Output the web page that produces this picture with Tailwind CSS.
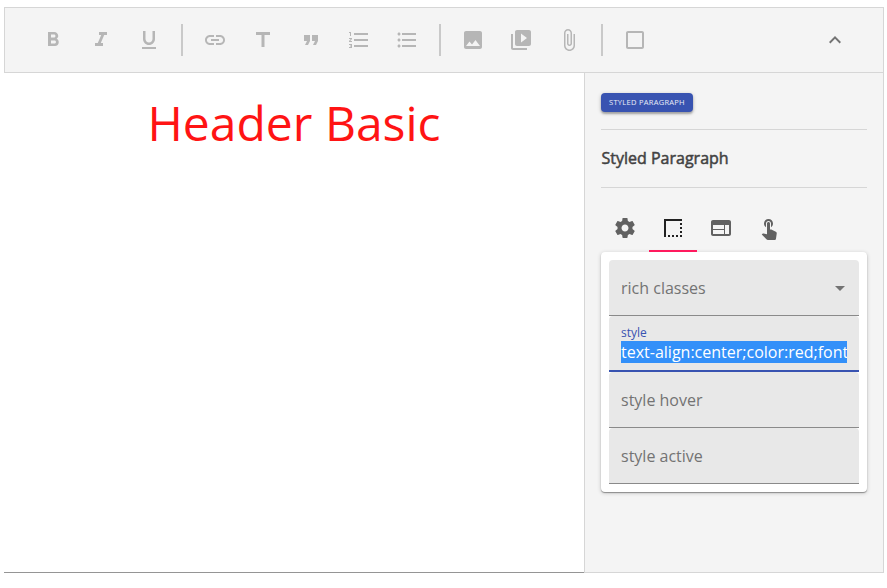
<!DOCTYPE html>
<html lang="en">
<head>
<meta charset="utf-8">
<title>Editor</title>
<script src="https://cdn.jsdelivr.net/npm/@tailwindcss/browser@4"></script>
</head>
<body class="bg-white w-[887px] h-[588px] overflow-hidden pl-1 pt-[7px] font-['Open_Sans',sans-serif]">
<div class="w-[880px] h-[566px] flex flex-col">
  <header class="h-[66px] shrink-0 border border-[#d6d6d6] bg-[#f4f4f4] flex items-center pl-9 text-[#b6b6b6]">
    <div class="flex gap-6">
      <svg class="size-6" viewBox="0 0 24 24" fill="currentColor"><path d="M15.600 10.790c.97-.67 1.650-1.770 1.650-2.790 0-2.260-1.750-4-4-4H7v14h7.040c2.090 0 3.710-1.700 3.710-3.790 0-1.520-.86-2.820-2.150-3.420zM10 6.500h3c.83 0 1.500.67 1.500 1.500s-.67 1.500-1.500 1.500h-3zm3.500 9H10v-3h3.500c.83 0 1.500.67 1.500 1.500s-.67 1.500-1.500 1.500z"/></svg>
      <svg class="size-6" viewBox="0 0 24 24" fill="currentColor"><path d="M10 4v3h2.210l-3.420 8H6v3h8v-3h-2.210l3.420-8H18V4z"/></svg>
      <svg class="size-6" viewBox="0 0 24 24" fill="currentColor"><path d="M12 17c3.310 0 6-2.690 6-6V3h-2.500v8c0 1.930-1.570 3.500-3.500 3.500S8.500 12.930 8.500 11V3H6v8c0 3.310 2.690 6 6 6zm-7 2v2h14v-2z"/></svg>
    </div>
    <div class="w-0.5 h-8 bg-[#c9c9c9] mx-5"></div>
    <div class="flex gap-6">
      <svg class="size-6" viewBox="0 0 24 24" fill="currentColor"><path d="M3.900 12c0-1.710 1.390-3.100 3.100-3.100h4V7H7c-2.760 0-5 2.240-5 5s2.240 5 5 5h4v-1.900H7c-1.710 0-3.100-1.390-3.100-3.100zM8 13h8v-2H8zm9-6h-4v1.900h4c1.710 0 3.100 1.390 3.100 3.100s-1.390 3.100-3.100 3.100h-4V17h4c2.760 0 5-2.240 5-5s-2.240-5-5-5z"/></svg>
      <svg class="size-6" viewBox="0 0 24 24" fill="currentColor"><path d="M5 4v3h5.500v12h3V7H19V4z"/></svg>
      <svg class="size-6" viewBox="0 0 24 24" fill="currentColor"><path d="M6 17h3l2-4V7H5v6h3zm8 0h3l2-4V7h-6v6h3z"/></svg>
      <svg class="size-6" viewBox="0 0 24 24" fill="currentColor"><path d="M2 17h2v.5H3v1h1v.5H2v1h3v-4H2zm1-9h1V4H2v1h1zm-1 3h1.800L2 13.100v.9h3v-1H3.200L5 10.900V10H2zm5-6v2h14V5zm0 14h14v-2H7zm0-6h14v-2H7z"/></svg>
      <svg class="size-6" viewBox="0 0 24 24" fill="currentColor"><path d="M4 10.500c-.83 0-1.500.67-1.500 1.500s.67 1.500 1.500 1.500 1.500-.67 1.500-1.500-.67-1.500-1.500-1.500zm0-6c-.83 0-1.500.67-1.500 1.500S3.170 7.500 4 7.500 5.500 6.830 5.500 6 4.830 4.500 4 4.500zm0 12c-.83 0-1.500.68-1.500 1.500s.68 1.500 1.500 1.500 1.500-.68 1.500-1.500-.67-1.500-1.500-1.500zM7 19h14v-2H7zm0-6h14v-2H7zm0-8v2h14V5z"/></svg>
    </div>
    <div class="w-0.5 h-8 bg-[#c9c9c9] mx-5"></div>
    <div class="flex gap-6">
      <svg class="size-6" viewBox="0 0 24 24" fill="currentColor"><path d="M21 19V5c0-1.100-.9-2-2-2H5c-1.100 0-2 .9-2 2v14c0 1.100.9 2 2 2h14c1.100 0 2-.9 2-2zM8.500 13.500l2.500 3.010L14.500 12l4.500 6H5z"/></svg>
      <svg class="size-6" viewBox="0 0 24 24" fill="currentColor"><path d="M4 6H2v14c0 1.100.9 2 2 2h14v-2H4zm16-4H8c-1.100 0-2 .9-2 2v12c0 1.100.9 2 2 2h12c1.100 0 2-.9 2-2V4c0-1.100-.9-2-2-2zm-8 12.500v-9l6 4.500z"/></svg>
      <svg class="size-6" viewBox="0 0 24 24" fill="currentColor"><path d="M16.500 6v11.500c0 2.210-1.790 4-4 4s-4-1.790-4-4V5c0-1.380 1.120-2.500 2.500-2.500s2.500 1.120 2.500 2.500v10.500c0 .55-.45 1-1 1s-1-.45-1-1V6H10v9.500c0 1.380 1.120 2.500 2.500 2.500s2.500-1.120 2.500-2.500V5c0-2.210-1.790-4-4-4S7 2.790 7 5v12.500c0 3.040 2.460 5.500 5.500 5.500s5.500-2.460 5.500-5.500V6z"/></svg>
    </div>
    <div class="w-0.5 h-8 bg-[#c9c9c9] mx-5"></div>
    <svg class="size-6" viewBox="0 0 24 24" fill="currentColor"><path d="M19 5v14H5V5zm0-2H5c-1.100 0-2 .9-2 2v14c0 1.100.9 2 2 2h14c1.100 0 2-.9 2-2V5c0-1.100-.9-2-2-2z"/></svg>
    <svg class="size-6 ml-auto mr-9 text-[#737373]" viewBox="0 0 24 24" fill="currentColor"><path d="M12 8l-6 6 1.410 1.410L12 10.830l4.590 4.580L18 14z"/></svg>
  </header>
  <div class="flex flex-1">
    <main class="w-[580px] border-b border-[#959595] pt-[17px] text-center">
      <h1 class="text-[48px] leading-[66px] text-[#ff1414]">Header Basic</h1>
    </main>
    <aside class="w-[300px] border-l border-r border-b border-[#d6d6d6] bg-[#f4f4f4] px-4 pt-5">
      <button class="flex justify-center h-[19px] w-[92px] rounded-[4px] bg-[#3853b1] text-[7.5px] leading-[19px] tracking-[0.28px] text-white/90 whitespace-nowrap shadow-[0_2px_2px_rgba(0,0,0,0.24),0_1px_4px_rgba(0,0,0,0.2)]">STYLED PARAGRAPH</button>
      <div class="mt-[17px] h-[59px] border-y border-[#d6d6d6] pl-[0.5px] text-base leading-[57px] text-[#424242] [-webkit-text-stroke:0.5px_#424242]">Styled Paragraph</div>
      <nav class="mt-4 h-12 flex text-[#616161]">
        <div class="w-12 flex items-center justify-center"><svg class="size-6" viewBox="0 0 24 24" fill="currentColor"><path d="M19.430 12.980c.04-.32.07-.64.07-.98s-.03-.66-.07-.98l2.110-1.650c.19-.15.24-.42.12-.64l-2-3.460c-.12-.22-.39-.3-.61-.22l-2.490 1c-.52-.4-1.080-.73-1.690-.98l-.38-2.650C14.460 2.180 14.250 2 14 2h-4c-.25 0-.46.18-.49.42l-.38 2.650c-.61.25-1.170.59-1.690.98l-2.490-1c-.23-.09-.49 0-.61.22l-2 3.460c-.13.22-.07.49.12.64l2.110 1.650c-.04.32-.07.65-.07.98s.03.66.07.98l-2.110 1.650c-.19.15-.24.42-.12.64l2 3.460c.12.22.39.3.61.22l2.490-1c.52.4 1.080.73 1.690.98l.38 2.650c.03.24.24.42.49.42h4c.25 0 .46-.18.49-.42l.38-2.650c.61-.25 1.170-.59 1.690-.98l2.490 1c.23.09.49 0 .61-.22l2-3.460c.12-.22.07-.49-.12-.64zM12 15.500c-1.930 0-3.500-1.570-3.500-3.500s1.570-3.500 3.500-3.500 3.500 1.570 3.500 3.500-1.570 3.500-3.500 3.500z"/></svg></div>
        <div class="w-12 flex items-center justify-center border-b-2 border-[#ff1a5e] pt-0.5 text-[#212121]"><svg class="size-6" viewBox="0 0 24 24" fill="currentColor"><path d="M15 21h2v-2h-2zm4 0h2v-2h-2zM7 21h2v-2H7zm4 0h2v-2h-2zm8-4h2v-2h-2zm0-4h2v-2h-2zM3 3v18h2V5h16V3zm16 6h2V7h-2z"/></svg></div>
        <div class="w-12 flex items-center justify-center"><svg class="size-6" viewBox="0 0 24 24" fill="currentColor"><path d="M20 4H4c-1.100 0-1.990.9-1.990 2L2 18c0 1.100.9 2 2 2h16c1.100 0 2-.9 2-2V6c0-1.100-.9-2-2-2zm-5 14H4v-4h11zm0-5H4V9h11zm5 5h-4V9h4z"/></svg></div>
        <div class="w-12 flex items-center justify-center"><svg class="size-6" viewBox="0 0 24 24" fill="currentColor"><path d="M9 11.240V7.500C9 6.120 10.120 5 11.500 5S14 6.120 14 7.500v3.740c1.210-.81 2-2.180 2-3.740C16 5.010 13.990 3 11.500 3S7 5.010 7 7.500c0 1.560.79 2.930 2 3.740zm9.840 4.630l-4.540-2.260c-.17-.07-.35-.11-.54-.11H13v-6c0-.83-.67-1.500-1.500-1.500S10 6.670 10 7.500v10.740l-3.430-.72c-.08-.01-.15-.03-.24-.03-.31 0-.59.13-.79.33l-.79.8 4.940 4.940c.27.27.65.44 1.060.44h6.790c.75 0 1.330-.55 1.440-1.280l.75-5.270c.01-.07.02-.14.02-.2 0-.62-.38-1.160-.91-1.380z"/></svg></div>
      </nav>
      <section class="h-60 rounded-[4px] bg-white p-2 text-base text-[#737373] shadow-[0_1px_1px_rgba(0,0,0,0.35),0_1px_4px_rgba(0,0,0,0.2)]">
        <div class="h-14 rounded-t-[4px] border-b border-[#8a8a8a] bg-[#e8e8e8] pl-3 pr-[7px] flex items-center justify-between"><span>rich classes</span><svg class="size-6" viewBox="0 0 24 24" fill="currentColor"><path d="M7 10l5 5 5-5z"/></svg></div>
        <div class="h-14 rounded-t-[4px] border-b-2 border-[#3853b1] bg-[#e8e8e8] px-3 pt-[9px]">
          <div class="text-xs leading-4 text-[#3853b1]">style</div>
          <div class="h-[22px] leading-[22px] overflow-hidden whitespace-nowrap bg-[#3390f9] text-white">text-align:center;color:red;font</div>
        </div>
        <div class="h-14 rounded-t-[4px] border-b border-[#8a8a8a] bg-[#e8e8e8] px-3 flex items-center">style hover</div>
        <div class="h-14 rounded-t-[4px] border-b border-[#8a8a8a] bg-[#e8e8e8] px-3 flex items-center">style active</div>
      </section>
    </aside>
  </div>
</div>
</body>
</html>
